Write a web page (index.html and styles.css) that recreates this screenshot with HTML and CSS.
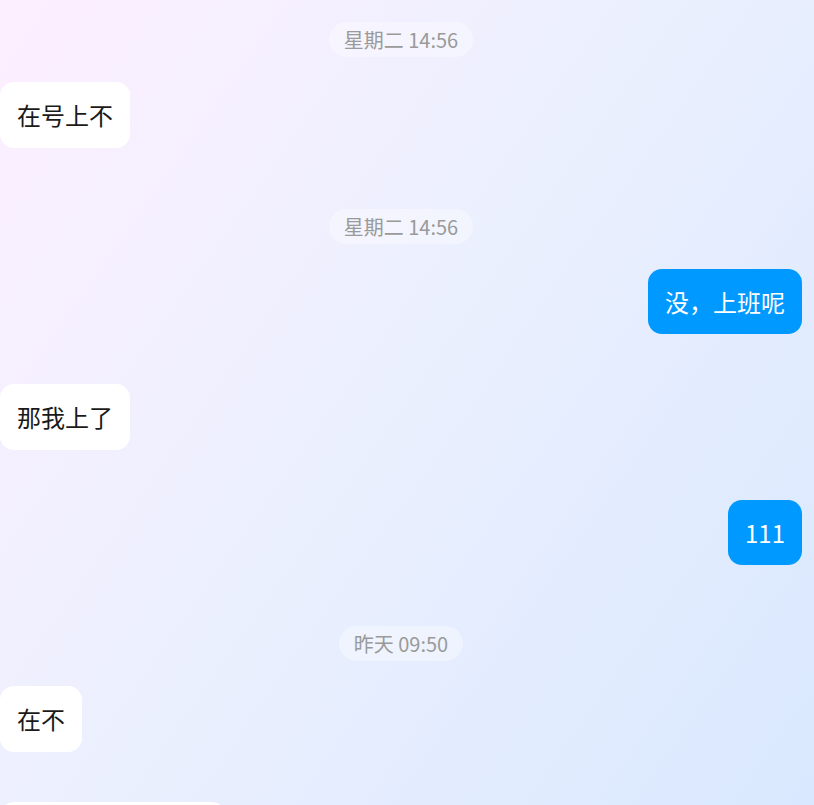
FILE: index.html
```html
<!DOCTYPE html>
<html lang="zh-CN">
<head>
<meta charset="utf-8">
<title>聊天</title>
<link rel="stylesheet" href="styles.css">
</head>
<body>
<div class="chat">
  <div class="time"><span class="pill">星期二 14:56</span></div>
  <div class="row recv"><div class="bubble">在号上不</div></div>
  <div class="time"><span class="pill">星期二 14:56</span></div>
  <div class="row sent"><div class="bubble">没，上班呢</div></div>
  <div class="row recv"><div class="bubble">那我上了</div></div>
  <div class="row sent"><div class="bubble">111</div></div>
  <div class="time"><span class="pill">昨天 09:50</span></div>
  <div class="row recv"><div class="bubble">在不</div></div>
  <div class="row recv"><div class="bubble">今天晚上一起玩吗</div></div>
</div>
</body>
</html>
```

FILE: styles.css
```css
html, body {
  margin: 0;
  padding: 0;
  height: 100%;
  overflow: hidden;
}
body {
  background: linear-gradient(125deg, #fdefff 0%, #ecf0fe 45%, #d9e8fe 100%);
  font-family: "Noto Sans CJK SC", "Noto Sans", sans-serif;
}
.chat {
  display: flex;
  flex-direction: column;
  padding: 11px 12px 0 0;
  width: 814px;
  box-sizing: border-box;
}
.time {
  display: flex;
  justify-content: center;
  margin: 11px 0 25px;
}
.pill {
  height: 35px;
  line-height: 35px;
  padding: 0 15px;
  border-radius: 18px;
  background: rgba(255, 255, 255, 0.35);
  color: #9a9a9a;
  font-size: 20px;
}
.row {
  display: flex;
  margin-bottom: 50px;
}
.row.sent {
  justify-content: flex-end;
}
.bubble {
  font-size: 24px;
  line-height: 33.5px;
  padding: 16px 17px;
  border-radius: 14px;
  background: #ffffff;
  color: #1a1a1a;
}
.sent .bubble {
  background: #0099ff;
  color: #ffffff;
}
```
